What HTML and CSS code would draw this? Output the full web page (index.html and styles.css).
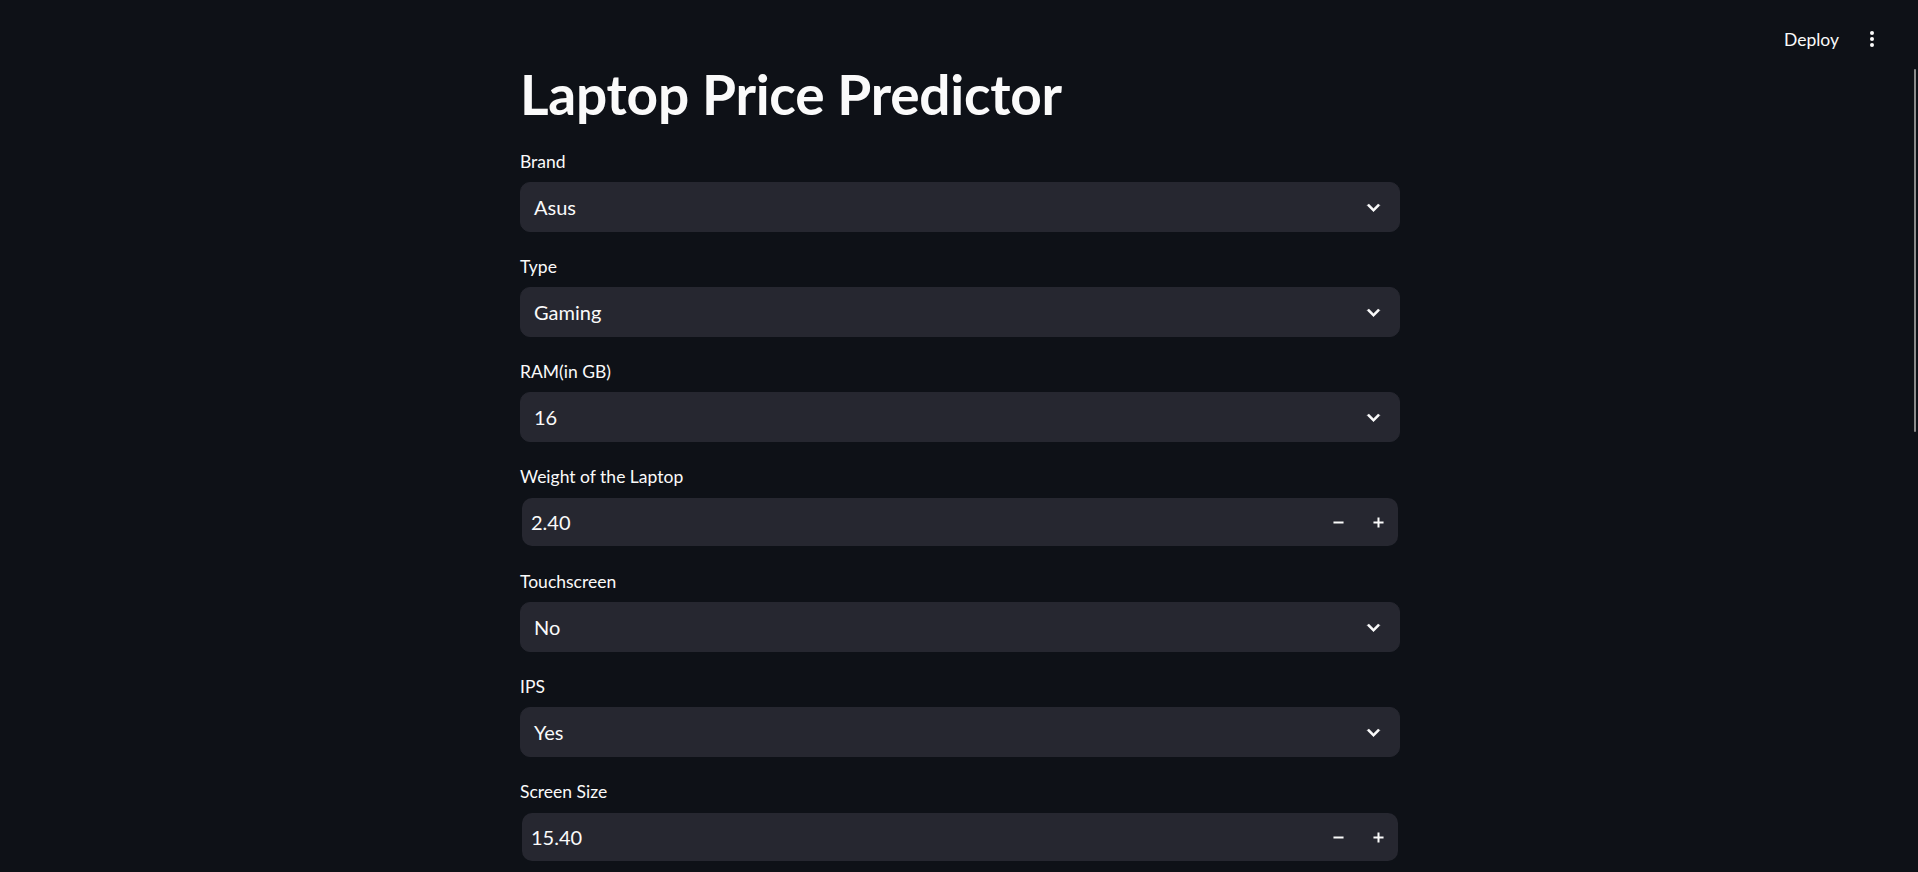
FILE: index.html
```html
<!DOCTYPE html>
<html lang="en">
<head>
<meta charset="utf-8">
<title>Laptop Price Predictor</title>
<link rel="stylesheet" href="styles.css">
</head>
<body>
<div class="app">
  <header class="toolbar">
    <button class="deploy">Deploy</button>
    <button class="menu" aria-label="Main menu">
      <span class="dot"></span><span class="dot"></span><span class="dot"></span>
    </button>
  </header>
  <div class="scroll-thumb"></div>

  <main class="block">
    <h1 class="title">Laptop Price Predictor</h1>

    <div class="widget">
      <label class="wlabel">Brand</label>
      <div class="select"><span class="value">Asus</span>
        <svg class="chev" viewBox="0 0 24 24"><path d="M16.59 8.59L12 13.17 7.41 8.59 6 10l6 6 6-6z"/></svg></div>
    </div>

    <div class="widget">
      <label class="wlabel">Type</label>
      <div class="select"><span class="value">Gaming</span>
        <svg class="chev" viewBox="0 0 24 24"><path d="M16.59 8.59L12 13.17 7.41 8.59 6 10l6 6 6-6z"/></svg></div>
    </div>

    <div class="widget">
      <label class="wlabel">RAM(in GB)</label>
      <div class="select"><span class="value">16</span>
        <svg class="chev" viewBox="0 0 24 24"><path d="M16.59 8.59L12 13.17 7.41 8.59 6 10l6 6 6-6z"/></svg></div>
    </div>

    <div class="widget">
      <label class="wlabel">Weight of the Laptop</label>
      <div class="number">
        <div class="number-inner">
          <span class="nvalue">2.40</span>
          <button class="step" aria-label="Decrement"><svg viewBox="0 0 12 12"><path d="M0.5 6h11"/></svg></button>
          <button class="step" aria-label="Increment"><svg viewBox="0 0 12 12"><path d="M0.5 6h11M6 0.5v11"/></svg></button>
        </div>
      </div>
    </div>

    <div class="widget">
      <label class="wlabel">Touchscreen</label>
      <div class="select"><span class="value">No</span>
        <svg class="chev" viewBox="0 0 24 24"><path d="M16.59 8.59L12 13.17 7.41 8.59 6 10l6 6 6-6z"/></svg></div>
    </div>

    <div class="widget">
      <label class="wlabel">IPS</label>
      <div class="select"><span class="value">Yes</span>
        <svg class="chev" viewBox="0 0 24 24"><path d="M16.59 8.59L12 13.17 7.41 8.59 6 10l6 6 6-6z"/></svg></div>
    </div>

    <div class="widget">
      <label class="wlabel">Screen Size</label>
      <div class="number">
        <div class="number-inner">
          <span class="nvalue">15.40</span>
          <button class="step" aria-label="Decrement"><svg viewBox="0 0 12 12"><path d="M0.5 6h11"/></svg></button>
          <button class="step" aria-label="Increment"><svg viewBox="0 0 12 12"><path d="M0.5 6h11M6 0.5v11"/></svg></button>
        </div>
      </div>
    </div>
  </main>
</div>
</body>
</html>
```

FILE: styles.css
```css
* { box-sizing: border-box; }

html, body {
  margin: 0;
  height: 872px;
  overflow: hidden;
  background: #0e1117;
}

body {
  color: #fafafa;
  font-family: Lato, "Open Sans", sans-serif;
}

.app {
  position: relative;
  height: 872px;
  overflow: hidden;
  padding-left: 2px;
}

.toolbar {
  position: absolute;
  top: 0;
  right: 26px;
  height: 78px;
  display: flex;
  align-items: center;
}

.deploy {
  background: none;
  border: none;
  color: #fafafa;
  font-family: inherit;
  font-size: 17.5px;
  padding: 0;
  margin-right: 13px;
}

.menu {
  width: 40px;
  height: 40px;
  background: none;
  border: none;
  padding: 0;
  display: flex;
  flex-direction: column;
  align-items: center;
  justify-content: center;
  gap: 2px;
}

.dot {
  width: 4px;
  height: 4px;
  border-radius: 50%;
  background: #fafafa;
}

.scroll-thumb {
  position: absolute;
  right: 2px;
  top: 69px;
  width: 2px;
  height: 363px;
  border-radius: 1px;
  background: #8b8b8b;
}

.block {
  width: 880px;
  margin: 0 auto;
  padding-top: 61px;
  display: flex;
  flex-direction: column;
  gap: 20px;
}

.title {
  margin: 0;
  font-size: 55px;
  line-height: 66px;
  font-weight: 700;
  letter-spacing: -0.25px;
}

.widget {
  display: flex;
  flex-direction: column;
}

.wlabel {
  height: 30px;
  line-height: 30px;
  font-size: 17.5px;
  margin-bottom: 5px;
}

.select {
  height: 50px;
  background: #262730;
  border: 1px solid #262730;
  border-radius: 10px;
  display: flex;
  align-items: center;
  padding: 0 13px 0 13px;
}

.value {
  flex: 1;
  font-size: 20px;
}

.chev {
  width: 25px;
  height: 25px;
  fill: #fafafa;
  stroke: #fafafa;
  stroke-width: 0.6;
}

.number {
  height: 50px;
  padding: 1px 2px;
}

.number-inner {
  height: 100%;
  background: #262730;
  border-radius: 10px;
  display: flex;
  align-items: center;
  padding-left: 9px;
}

.nvalue {
  flex: 1;
  font-size: 20px;
}

.step {
  width: 40px;
  height: 100%;
  background: none;
  border: none;
  padding: 0;
  display: flex;
  align-items: center;
  justify-content: center;
}

.step svg {
  width: 11px;
  height: 11px;
  stroke: #fafafa;
  stroke-width: 2.2;
  fill: none;
}
```
